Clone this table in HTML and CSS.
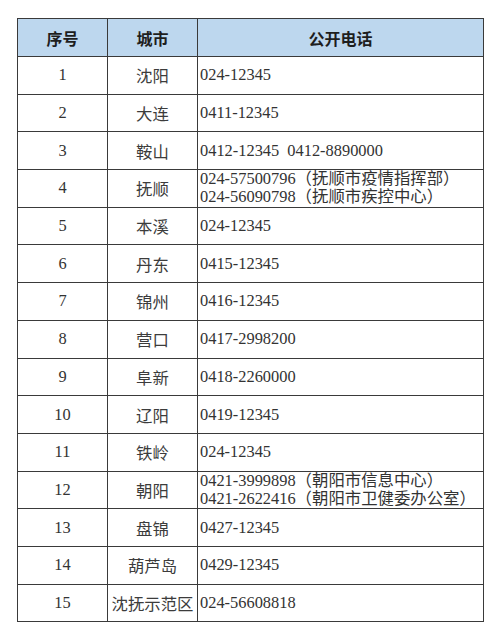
FILE: index.html
```html
<!DOCTYPE html>
<html lang="zh">
<head>
<meta charset="utf-8">
<link rel="stylesheet" href="styles.css">
</head>
<body>
<div class="page">
<table class="phones">
  <colgroup><col class="w-no"><col class="w-city"><col class="w-tel"></colgroup>
  <thead>
    <tr><th>序号</th><th>城市</th><th>公开电话</th></tr>
  </thead>
  <tbody>
    <tr><td class="c-no">1</td><td class="c-city">沈阳</td><td class="c-tel">024-12345</td></tr>
    <tr><td class="c-no">2</td><td class="c-city">大连</td><td class="c-tel">0411-12345</td></tr>
    <tr><td class="c-no">3</td><td class="c-city">鞍山</td><td class="c-tel">0412-12345 0412-8890000</td></tr>
    <tr><td class="c-no">4</td><td class="c-city">抚顺</td><td class="c-tel">024-57500796（抚顺市疫情指挥部）<br>024-56090798（抚顺市疾控中心）</td></tr>
    <tr><td class="c-no">5</td><td class="c-city">本溪</td><td class="c-tel">024-12345</td></tr>
    <tr><td class="c-no">6</td><td class="c-city">丹东</td><td class="c-tel">0415-12345</td></tr>
    <tr><td class="c-no">7</td><td class="c-city">锦州</td><td class="c-tel">0416-12345</td></tr>
    <tr><td class="c-no">8</td><td class="c-city">营口</td><td class="c-tel">0417-2998200</td></tr>
    <tr><td class="c-no">9</td><td class="c-city">阜新</td><td class="c-tel">0418-2260000</td></tr>
    <tr><td class="c-no">10</td><td class="c-city">辽阳</td><td class="c-tel">0419-12345</td></tr>
    <tr><td class="c-no">11</td><td class="c-city">铁岭</td><td class="c-tel">024-12345</td></tr>
    <tr><td class="c-no">12</td><td class="c-city">朝阳</td><td class="c-tel">0421-3999898（朝阳市信息中心）<br>0421-2622416（朝阳市卫健委办公室）</td></tr>
    <tr><td class="c-no">13</td><td class="c-city">盘锦</td><td class="c-tel">0427-12345</td></tr>
    <tr><td class="c-no">14</td><td class="c-city">葫芦岛</td><td class="c-tel">0429-12345</td></tr>
    <tr><td class="c-no">15</td><td class="c-city">沈抚示范区</td><td class="c-tel">024-56608818</td></tr>
  </tbody>
</table>
</div>
</body>
</html>
```
FILE: styles.css
```css
html, body {
  margin: 0;
  padding: 0;
  background: #ffffff;
}
.page {
  padding: 18px 0 0 17px;
}
.phones {
  border-collapse: collapse;
  table-layout: fixed;
  width: 466px;
  font-family: "Liberation Serif", "Noto Sans CJK SC", serif;
  font-size: 16.4px;
  color: #333333;
}
.w-no { width: 90px; }
.w-city { width: 90px; }
.w-tel { width: 286px; }
.phones th, .phones td {
  border: 1.3px solid #3a3a3a;
  padding: 0 2px;
  line-height: 18px;
  vertical-align: middle;
  white-space: nowrap;
  overflow: hidden;
}
.phones th {
  background: #bdd7ee;
  font-family: "Noto Sans CJK SC", sans-serif;
  font-weight: bold;
  font-size: 16px;
  color: #1e1e1e;
  height: 37px;
  text-align: center;
}
.phones td {
  height: 36.7px;
}
.c-no { text-align: center; }
.c-city {
  text-align: center;
  padding: 0;
  font-family: "Noto Sans CJK SC", sans-serif;
  color: #3c3c3c;
}
.c-tel { text-align: left; word-spacing: 4px; }
```
